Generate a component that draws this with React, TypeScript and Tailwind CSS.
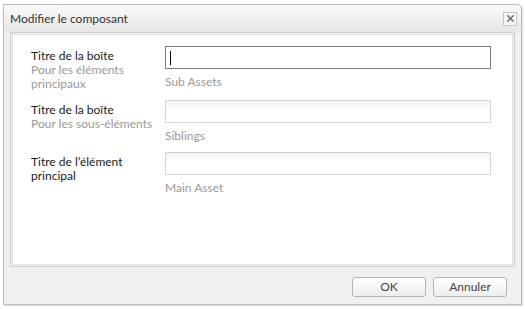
import { X } from "lucide-react";

type Row = { title: string[]; hint?: string[]; value: string; focused?: boolean };

const rows: Row[] = [
  { title: ["Titre de la boîte"], hint: ["Pour les éléments", "principaux"], value: "Sub Assets", focused: true },
  { title: ["Titre de la boîte"], hint: ["Pour les sous-éléments"], value: "Siblings" },
  { title: ["Titre de l’élément", "principal"], value: "Main Asset" },
];

function Field({ row }: { row: Row }) {
  return (
    <div className="flex">
      <div className="w-[134px] shrink-0 pt-[3px] text-[12px] leading-[14px]">
        {row.title.map((t) => (
          <div key={t} className="text-[#222]">{t}</div>
        ))}
        {row.hint?.map((t) => (
          <div key={t} className="text-[#999]">{t}</div>
        ))}
      </div>
      <div className="w-[326px]">
        <div
          className={
            row.focused
              ? "flex h-[23px] items-center border border-[#7a7a7a] bg-white pl-[4px]"
              : "h-[23px] border border-[#d4d4d4] bg-gradient-to-b from-[#f2f2f2] to-white to-[40%]"
          }
        >
          {row.focused && <div className="h-[14px] w-px bg-black" />}
        </div>
        <div className="mt-[5px] text-[12px] leading-[15px] text-[#9a9a9a]">{row.value}</div>
      </div>
    </div>
  );
}

export default function App() {
  return (
    <div className="h-[309px] w-[525px] overflow-hidden bg-white pl-[3px] pt-[4px] font-['Lato',Arial,sans-serif]">
      <div className="flex h-[301px] w-[519px] flex-col rounded-tr-[5px] border border-[#bdbdbd] bg-[#f0f0f0] shadow-[1px_1px_2px_rgba(0,0,0,0.15)]">
        <div className="flex h-[27px] shrink-0 items-center justify-between rounded-tr-[5px] bg-gradient-to-b from-[#fafafa] to-[#e6e6e6] pl-[6px] pr-[4px]">
          <span className="text-[12px] text-[#333]">Modifier le composant</span>
          <div className="flex h-[14px] w-[14px] items-center justify-center border border-[#c4c4c4] bg-[#f7f7f7]">
            <X className="h-[11px] w-[11px] text-[#666]" strokeWidth={3} />
          </div>
        </div>
        <div className="mx-[6px] h-[235px] shrink-0 border border-[#cfcfcf] p-[1px]">
          <div className="flex h-full flex-col gap-[9px] border border-[#e2e2e2] bg-white pl-[18px] pt-[11px]">
            {rows.map((r, i) => (
              <Field key={i} row={r} />
            ))}
          </div>
        </div>
        <div className="flex flex-1 items-start justify-end gap-[7px] pr-[14px] pt-[10px]">
          <button className="h-[20px] w-[74px] rounded-[3px] border border-[#b4b4b4] bg-gradient-to-b from-white to-[#ededed] text-[12px] text-[#444]">
            OK
          </button>
          <button className="h-[20px] w-[74px] rounded-[3px] border border-[#b4b4b4] bg-gradient-to-b from-white to-[#ededed] text-[12px] text-[#444]">
            Annuler
          </button>
        </div>
      </div>
    </div>
  );
}
